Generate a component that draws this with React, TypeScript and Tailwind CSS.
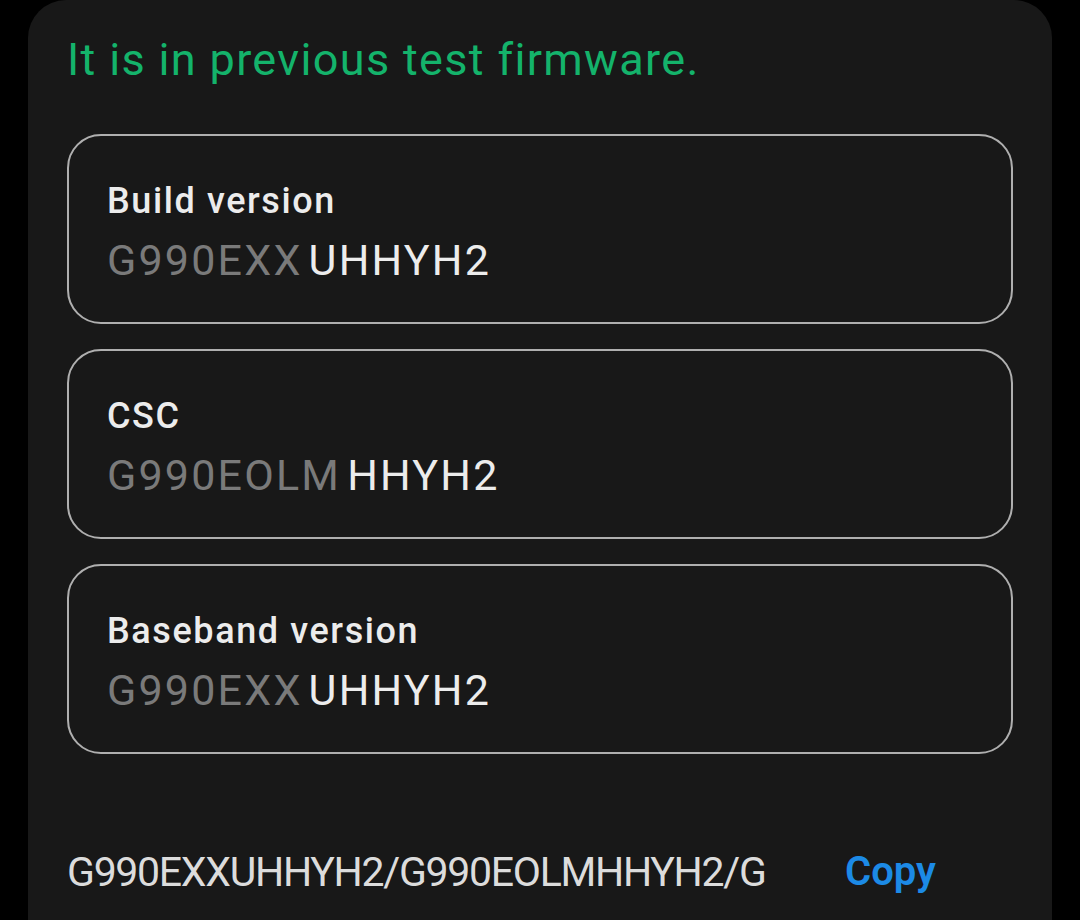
const rows = [
  { label: 'Build version', dim: 'G990EXX', bright: 'UHHYH2' },
  { label: 'CSC', dim: 'G990EOLM', bright: 'HHYH2' },
  { label: 'Baseband version', dim: 'G990EXX', bright: 'UHHYH2' },
]

function InfoCard({ label, dim, bright }: { label: string; dim: string; bright: string }) {
  return (
    <div className="flex h-[190px] flex-col justify-center rounded-[34px] border-2 border-[#afafaf] pl-[38px] pt-[5px]">
      <div className="text-[36px] font-medium leading-[44px] tracking-[1.6px] text-[#ececec]">{label}</div>
      <div className="mt-[12px] text-[43px] leading-[50px] tracking-[2.2px]">
        <span className="text-[#7a7a7a]">{dim}</span>
        <span className="ml-[6px] text-[#ececec]">{bright}</span>
      </div>
    </div>
  )
}

export default function App() {
  return (
    <div className="h-[920px] w-[1080px] overflow-hidden bg-black" style={{ fontFamily: 'Roboto, "Noto Sans", sans-serif' }}>
      <div className="ml-[28px] h-full w-[1024px] rounded-t-[38px] bg-[#181818] px-[39px]">
        <p className="pt-[30px] text-[45px] leading-[60px] tracking-[1.35px] text-[#14b36b]">It is in previous test firmware.</p>

        <div className="mt-[44px] flex flex-col gap-[25px]">
          {rows.map((r) => (
            <InfoCard key={r.label} {...r} />
          ))}
        </div>

        <div className="mt-[90px] flex items-center">
          <span className="w-[778px] text-[41px] leading-[56px] tracking-[-1.3px] text-[#dcdcdc]">G990EXXUHHYH2/G990EOLMHHYH2/G</span>
          <button className="text-[40px] font-semibold leading-[56px] text-[#1c8ae6]">Copy</button>
        </div>
      </div>
    </div>
  )
}
